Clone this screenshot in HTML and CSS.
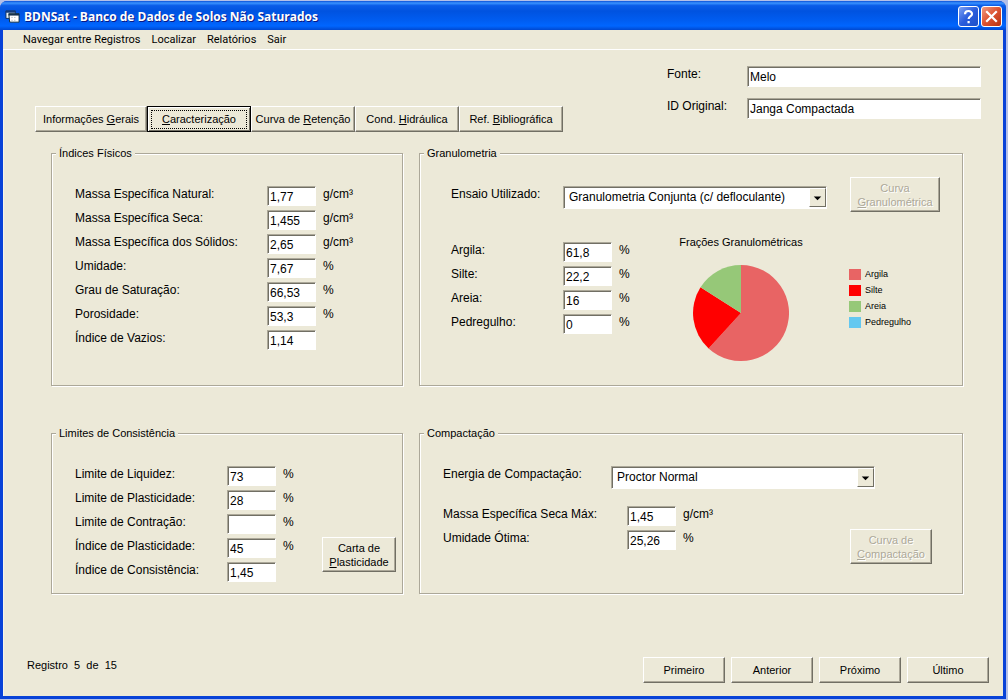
FILE: index.html
```html
<!DOCTYPE html>
<html lang="pt-BR">
<head>
<meta charset="utf-8">
<title>BDNSat - Banco de Dados de Solos Não Saturados</title>
<link rel="stylesheet" href="styles.css">
</head>
<body>
<div class="window">
  <header class="titlebar">
    <svg class="app-icon" viewBox="0 0 16 16" aria-hidden="true">
      <path d="M1 2h10v8H1z" fill="#e8f0f4" stroke="#0a2a5c"/>
      <path d="M1 2h10v2H1z" fill="#123a7a"/>
      <path d="M4 5h11v9H5z" fill="#fff" stroke="#0a2a3c"/>
      <path d="M4 5h11v2H4z" fill="#14304c"/>
      <path d="M7 9h1M10 9h1M7 12h1M10 12h1" stroke="#8a9aa8"/>
    </svg>
    <h1 class="title">BDNSat - Banco de Dados de Solos Não Saturados</h1>
    <div class="caption-buttons">
      <button class="caption help" type="button" aria-label="Ajuda">
        <svg viewBox="0 0 19 19"><path d="M6 7.2C6 3 13 3 13 7C13 9.5 9.6 9.4 9.6 12M9.6 14v2.2" fill="none" stroke="#fff" stroke-width="2.2"/></svg>
      </button>
      <button class="caption close" type="button" aria-label="Fechar">
        <svg viewBox="0 0 19 19"><path d="M5 5l9 9M14 5l-9 9" fill="none" stroke="#fff" stroke-width="2.2" stroke-linecap="square"/></svg>
      </button>
    </div>
  </header>

  <nav class="menubar">
    <button type="button">Navegar entre Registros</button>
    <button type="button">Localizar</button>
    <button type="button">Relatórios</button>
    <button type="button">Sair</button>
  </nav>

  <main class="client">
    <div class="top">
      <div class="tabs">
        <button class="button tab wide" type="button">Informações <u>G</u>erais</button>
        <button class="button tab current" type="button"><span class="focus"><u>C</u>aracterização</span></button>
        <button class="button tab" type="button">Curva de <u>R</u>etenção</button>
        <button class="button tab" type="button">Cond. <u>H</u>idráulica</button>
        <button class="button tab" type="button">Ref. <u>B</u>ibliográfica</button>
      </div>
      <div class="source">
        <label for="fonte">Fonte:</label><input id="fonte" class="text" value="Melo">
        <label for="ido">ID Original:</label><input id="ido" class="text" value="Janga Compactada">
      </div>
    </div>

    <div class="groups">
      <fieldset class="group">
        <legend>Índices Físicos</legend>
        <div class="content">
          <div class="fields physical">
            <label for="mn">Massa Específica Natural:</label><input id="mn" class="text" value="1,77"><span>g/cm³</span>
            <label for="ms">Massa Específica Seca:</label><input id="ms" class="text" value="1,455"><span>g/cm³</span>
            <label for="mo">Massa Específica dos Sólidos:</label><input id="mo" class="text" value="2,65"><span>g/cm³</span>
            <label for="um">Umidade:</label><input id="um" class="text" value="7,67"><span>%</span>
            <label for="gs">Grau de Saturação:</label><input id="gs" class="text" value="66,53"><span>%</span>
            <label for="po">Porosidade:</label><input id="po" class="text" value="53,3"><span>%</span>
            <label for="iv">Índice de Vazios:</label><input id="iv" class="text" value="1,14"><span></span>
          </div>
        </div>
      </fieldset>

      <fieldset class="group">
        <legend>Granulometria</legend>
        <div class="granulometry">
          <div class="test">
            <div class="test-field">
              <label for="ensaio">Ensaio Utilizado:</label>
              <div class="combo">
                <select id="ensaio"><option>Granulometria Conjunta (c/ defloculante)</option></select>
                <svg class="arrow" viewBox="0 0 16 18" aria-hidden="true"><path d="M4 8h8l-4 4z"/></svg>
              </div>
            </div>
            <button class="button tall large" type="button" disabled>Curva<br><u>G</u>ranulométrica</button>
          </div>
          <div class="fractions">
            <div class="fields soil">
              <label for="ar">Argila:</label><input id="ar" class="text" value="61,8"><span>%</span>
              <label for="si">Silte:</label><input id="si" class="text" value="22,2"><span>%</span>
              <label for="ae">Areia:</label><input id="ae" class="text" value="16"><span>%</span>
              <label for="pe">Pedregulho:</label><input id="pe" class="text" value="0"><span>%</span>
            </div>
            <figure class="chart">
              <figcaption>Frações Granulométricas</figcaption>
              <svg class="pie" viewBox="0 0 96 96" role="img" aria-label="Frações granulométricas">
                <path d="M48 48V0A48 48 0 1 1 15.600 83.400Z" fill="#e86464"/>
                <path d="M48 48L15.600 83.400A48 48 0 0 1 7.500 22.300Z" fill="#f00"/>
                <path d="M48 48L7.500 22.300A48 48 0 0 1 48 0Z" fill="#96c878"/>
              </svg>
            </figure>
            <ul class="legend">
              <li class="clay">Argila</li>
              <li class="silt">Silte</li>
              <li class="sand">Areia</li>
              <li class="gravel">Pedregulho</li>
            </ul>
          </div>
        </div>
      </fieldset>

      <fieldset class="group">
        <legend>Limites de Consistência</legend>
        <div class="content limits">
          <div class="fields consistency">
            <label for="ll">Limite de Liquidez:</label><input id="ll" class="text" value="73"><span>%</span>
            <label for="lp">Limite de Plasticidade:</label><input id="lp" class="text" value="28"><span>%</span>
            <label for="lc">Limite de Contração:</label><input id="lc" class="text" value=""><span>%</span>
            <label for="ip">Índice de Plasticidade:</label><input id="ip" class="text" value="45"><span>%</span>
            <label for="ic">Índice de Consistência:</label><input id="ic" class="text" value="1,45"><span></span>
          </div>
          <button class="button tall small" type="button">Carta de<br><u>P</u>lasticidade</button>
        </div>
      </fieldset>

      <fieldset class="group">
        <legend>Compactação</legend>
        <div class="content">
          <div class="energy">
            <label for="energia">Energia de Compactação:</label>
            <div class="combo">
              <select id="energia"><option>Proctor Normal</option></select>
              <svg class="arrow" viewBox="0 0 16 18" aria-hidden="true"><path d="M4 8h8l-4 4z"/></svg>
            </div>
          </div>
          <div class="compaction">
            <div class="fields optimum">
              <label for="mx">Massa Específica Seca Máx:</label><input id="mx" class="text" value="1,45"><span>g/cm³</span>
              <label for="uo">Umidade Ótima:</label><input id="uo" class="text" value="25,26"><span>%</span>
            </div>
            <button class="button tall" type="button" disabled>Curva de<br><u>C</u>ompactação</button>
          </div>
        </div>
      </fieldset>
    </div>

    <footer class="footer">
      <p class="record">Registro&nbsp; 5&nbsp; de&nbsp; 15</p>
      <div class="navigation">
        <button class="button" type="button">Primeiro</button>
        <button class="button" type="button">Anterior</button>
        <button class="button" type="button">Próximo</button>
        <button class="button" type="button">Último</button>
      </div>
    </footer>
  </main>
</div>
</body>
</html>
```
FILE: styles.css
```css
* { box-sizing: border-box; }

body {
  margin: 0;
  padding: 1px 2px 1px 0;
  background: #b4c0e8;
  color: #000;
  font: 12px/16px "Liberation Sans", Arial, sans-serif;
}

button, input, select { font: inherit; color: inherit; }

.window {
  display: flex;
  flex-direction: column;
  min-height: calc(100vh - 2px);
  background: #0842d8;
  border-radius: 7px 7px 0 0;
}

.titlebar {
  display: flex;
  align-items: center;
  height: 29px;
  padding: 2px 4px 0 5px;
  border-radius: 7px 7px 0 0;
  background: linear-gradient(#0a50d8 0, #3a93ff 7%, #0a5ce8 16%, #0053e0 35%, #005cf0 65%, #0066ff 86%, #0048d0 100%);
}

.app-icon { width: 15px; height: 15px; }

.title {
  margin: 0 auto 0 4px;
  color: #fff;
  font: bold 12px/16px "Open Sans", sans-serif;
  text-shadow: 1px 1px #0a1883;
}

.caption-buttons { display: flex; gap: 2px; }

.caption {
  width: 21px;
  height: 21px;
  padding: 0;
  border: 1px solid #fff;
  border-radius: 3px;
}

.caption svg { display: block; width: 19px; height: 19px; }
.help { background: linear-gradient(135deg, #7da2f4, #2a5cdc 50%, #1c50c8); }
.close { background: linear-gradient(135deg, #f09a80, #dc5230 50%, #b83412); }

.menubar {
  display: flex;
  gap: 11px;
  height: 20px;
  margin: 0 3px;
  padding-left: 20px;
  border-bottom: 1px solid #fff;
  background: #ece9d8;
  font: 11px/18px Roboto, sans-serif;
}

.menubar button { padding: 0; border: 0; background: none; }

.client {
  display: flex;
  flex: 1;
  flex-direction: column;
  margin: 0 3px 3px;
  padding-bottom: 13px;
  background: #ece9d8;
  border-left: 1px solid #f6f4ea;
}

.top {
  display: flex;
  justify-content: space-between;
  min-height: 96px;
  padding: 16px 22px 0 31px;
}

.tabs { display: flex; margin-top: 40px; }

.source {
  display: grid;
  grid-template-columns: 80px 234px;
  grid-auto-rows: 32px;
  align-items: start;
}

.text {
  width: 100%;
  height: 20px;
  padding: 1px 2px 0;
  border: 1px solid;
  border-color: #aca899 #fff #fff #aca899;
  border-radius: 0;
  background: #fff;
  box-shadow: inset 1px 1px #716f64;
  outline: 0;
}

.source .text { height: 21px; }

.button {
  width: 82px;
  height: 26px;
  padding: 0;
  border: 1px solid;
  border-color: #fff #716f64 #716f64 #fff;
  border-radius: 0;
  background: #ece9d8;
  box-shadow: inset -1px -1px #aca899;
  font-size: 11px;
  line-height: 14px;
}

.button:disabled { color: #aca899; text-shadow: 1px 1px #fff; }
.tab { width: 104px; white-space: nowrap; }
.tab.wide { width: 112px; }
.tab.current { padding: 2px; border-color: #000; box-shadow: inset 1px 1px #fff, inset -1px -1px #716f64; }
.focus { display: block; margin: 0 1px; border: 1px dotted #000; line-height: 17px; }
.tall { height: 35px; }
.large { width: 90px; }
.small { width: 74px; }

.groups {
  display: grid;
  grid-template-columns: 352fr 544fr;
  gap: 40px 16px;
  padding: 0 40px 0 47px;
}

.group {
  min-width: 0;
  min-height: 168px;
  margin: 0;
  padding: 0;
  border: 1px solid #aca899;
  box-shadow: 1px 1px #fff, inset 1px 1px #fff;
}

.group:nth-child(-n + 2) { min-height: 240px; }

.group legend {
  margin-left: 4px;
  padding: 0 3px;
  background: #ece9d8;
  font-size: 11px;
  line-height: 14px;
}

.content { padding: 26px 6px 0 23px; }

.fields {
  display: grid;
  grid-auto-rows: 24px;
  column-gap: 7px;
  align-items: start;
}

.physical { grid-template-columns: 185px 49px 1fr; }
.consistency { grid-template-columns: 145px 49px 32px; }
.soil { grid-template-columns: 105px 49px 24px; padding-top: 7px; }
.optimum { grid-template-columns: 177px 49px 40px; }

.limits, .compaction { display: flex; justify-content: space-between; }
.limits .button { margin-top: 71px; }
.compaction { padding-right: 24px; }
.compaction .button { margin-top: 23px; }

.energy { display: grid; grid-template-columns: 168px 264px; height: 40px; }

.granulometry { padding: 17px 22px 0 31px; }
.test { display: flex; justify-content: space-between; }
.test-field { display: grid; grid-template-columns: 112px 264px; padding-top: 9px; }

.combo { position: relative; height: 23px; }

.combo select {
  width: 100%;
  height: 23px;
  padding: 0 20px 1px 5px;
  appearance: none;
  border: 1px solid;
  border-color: #aca899 #fff #fff #aca899;
  border-radius: 0;
  background: #fff;
  box-shadow: inset 1px 1px #716f64;
}

.arrow {
  position: absolute;
  top: 2px;
  right: 1px;
  width: 17px;
  height: 19px;
  border: 1px solid;
  border-color: #fff #716f64 #716f64 #fff;
  background: #ece9d8;
  pointer-events: none;
}

.fractions { display: flex; margin-top: 23px; }
.chart { flex: 1; max-width: 196px; margin: 0; text-align: center; }
.chart figcaption { font-size: 11px; line-height: 14px; }
.pie { display: block; width: 96px; height: 96px; margin: 16px auto 0; }

.legend {
  margin: 31px 0 0 10px;
  padding: 0;
  list-style: none;
  font-size: 9px;
  line-height: 16px;
}

.legend li { display: flex; align-items: center; gap: 4px; }
.legend li::before { width: 12px; height: 11px; content: ""; }
.clay::before { background: #e86464; }
.silt::before { background: #f00; }
.sand::before { background: #96c878; }
.gravel::before { background: #64c8f0; }

.footer {
  display: flex;
  justify-content: space-between;
  margin-top: auto;
  padding: 0 14px 0 23px;
}

.record { margin: 0; font-size: 11px; }
.navigation { display: flex; gap: 6px; }
```
